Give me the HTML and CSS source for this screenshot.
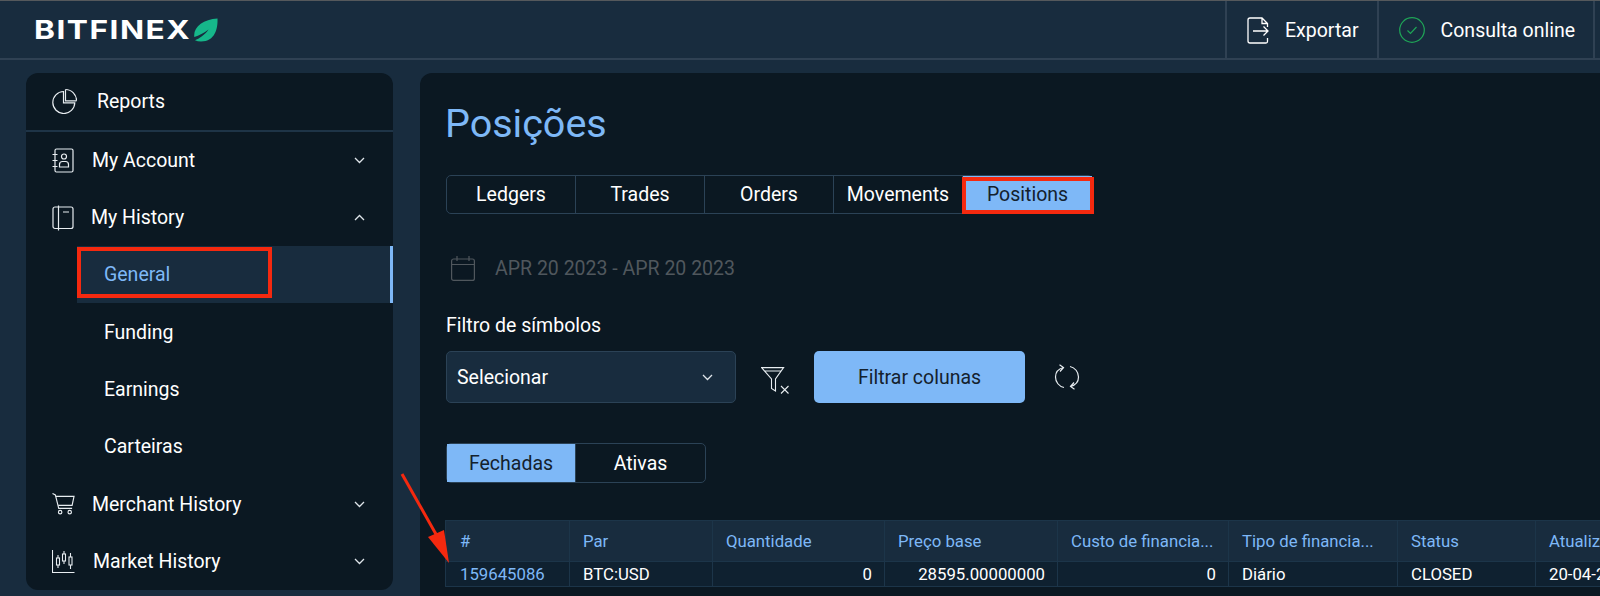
FILE: index.html
```html
<!DOCTYPE html>
<html>
<head>
	<meta charset="utf-8">
	<meta name="viewport" content="width=device-width, initial-scale=1">
	<title>Bitfinex Reports</title>
	<link rel="stylesheet" href="styles.css">
</head>
<body>
<header class="topbar">
   <div class="logo">
      <span class="logo-text">BITFINEX</span>
      <svg class="logo-leaf" width="24" height="24" viewBox="0 0 24 24"><path d="M23.500 .5C23.800 8 22.500 23.500 7 23.500c-2.300 0-4.300-.4-6-1.200C5 20.500 11 17 14.500 11.500 10 15 5 17.500 .3 19 -1 9 9 1.500 23.500 .5z" fill="#16b78a"/></svg>
   </div>
   <div class="topbar-right">
      <div class="top-item">
         <svg width="22" height="27" viewBox="0 0 22 27" fill="none" stroke="#fff" stroke-width="1.300"><path d="M20.500 10V6.500L15 1H3a2 2 0 0 0-2 2v21a2 2 0 0 0 2 2h16a1.500 1.500 0 0 0 1.500-1.500V21M15 1v5.500h5.500M6 14h15M16.500 9.500 21 14l-4.500 4.500"/></svg>
         <span>Exportar</span>
      </div>
      <div class="top-item">
         <svg width="26" height="26" viewBox="0 0 26 26" fill="none" stroke="#1fa557" stroke-width="1.200"><circle cx="13" cy="13" r="12.300"/><path d="M8.500 13.500l3 3 6-6.500"/></svg>
         <span>Consulta online</span>
      </div>
   </div>
</header>

<div class="page">
   <nav class="sidebar">
      <div class="nav-item nav-reports">
         <svg width="25" height="26" viewBox="0 0 25 26" fill="none" stroke="#e8edf1" stroke-width="1.200"><path d="M11.500 3.500a11 11 0 1 0 11.300 11.300H11.500z"/><path d="M13.500 1.500v11.300h11"/><path d="M13.500 1.500a11 11 0 0 1 11 11.300"/></svg>
         <span>Reports</span>
      </div>
      <div class="nav-item">
         <svg width="22" height="25" viewBox="0 0 22 25" fill="none" stroke="#e8edf1" stroke-width="1.200"><rect x="3" y="1" width="18" height="23" rx="1.500"/><path d="M.5 6.500h5M.5 12.500h5M.5 18.500h5"/><circle cx="12" cy="8.500" r="2.500"/><path d="M7.500 19v-2.500a3 3 0 0 1 3-3h3a3 3 0 0 1 3 3V19z"/></svg>
         <span>My Account</span>
         <svg class="chev" width="11" height="7" viewBox="0 0 11 7" fill="none" stroke="#dfe5ea" stroke-width="1.300"><path d="M1 1l4.500 4.500L10 1"/></svg>
      </div>
      <div class="nav-item nav-tight">
         <svg width="22" height="26" viewBox="0 0 22 26" fill="none" stroke="#e8edf1" stroke-width="1.200"><rect x="1" y="2" width="20" height="21.500" rx="2"/><path d="M6.500 .5v25M11 7h6"/></svg>
         <span>My History</span>
         <svg class="chev" width="11" height="7" viewBox="0 0 11 7" fill="none" stroke="#dfe5ea" stroke-width="1.300"><path d="M1 6l4.500-4.500L10 6"/></svg>
      </div>
      <div class="sub-item active">General</div>
      <div class="sub-item">Funding</div>
      <div class="sub-item">Earnings</div>
      <div class="sub-item">Carteiras</div>
      <div class="nav-item nav-tight">
         <svg width="23" height="22" viewBox="0 0 24 23" fill="none" stroke="#e8edf1" stroke-width="1.200"><path d="M.5 .5l3 1.500 3.500 14h14"/><path d="M3.800 3.500H23l-2 9.500H6.500"/><circle cx="8.500" cy="20" r="1.800"/><circle cx="18.500" cy="20" r="1.800"/></svg>
         <span>Merchant History</span>
         <svg class="chev" width="11" height="7" viewBox="0 0 11 7" fill="none" stroke="#dfe5ea" stroke-width="1.300"><path d="M1 1l4.500 4.500L10 1"/></svg>
      </div>
      <div class="nav-item">
         <svg width="23" height="23" viewBox="0 0 23 23" fill="none" stroke="#e8edf1" stroke-width="1.100"><path d="M.5 0v22.500H22.500"/><rect x="4.500" y="8" width="3" height="7"/><path d="M6 5v3M6 15v3"/><rect x="10.500" y="4" width="3" height="7"/><path d="M12 1v3M12 11v3"/><rect x="17" y="7" width="3" height="8"/><path d="M18.500 3v4M18.500 15v4"/></svg>
         <span>Market History</span>
         <svg class="chev" width="11" height="7" viewBox="0 0 11 7" fill="none" stroke="#dfe5ea" stroke-width="1.300"><path d="M1 1l4.500 4.500L10 1"/></svg>
      </div>
   </nav>

   <main class="content">
      <h1>Posições</h1>

      <div class="tabs">
         <div class="tab">Ledgers</div>
         <div class="tab">Trades</div>
         <div class="tab">Orders</div>
         <div class="tab">Movements</div>
         <div class="tab selected">Positions</div>
      </div>

      <div class="dates">
         <svg width="24" height="25" viewBox="0 0 24 25" fill="none" stroke="#50575d" stroke-width="1.200"><rect x=".6" y="3" width="22.800" height="21.400" rx="2"/><path d="M.6 8.500h22.800M6 0v5M18 0v5"/></svg>
         <span>APR 20 2023 - APR 20 2023</span>
      </div>

      <label class="filter-label">Filtro de símbolos</label>
      <div class="filters">
         <div class="select">
            <span>Selecionar</span>
            <svg width="11" height="7" viewBox="0 0 11 7" fill="none" stroke="#dfe5ea" stroke-width="1.300"><path d="M1 1l4.500 4.500L10 1"/></svg>
         </div>
         <svg class="clear-icon" width="28" height="27" viewBox="0 0 28 27" fill="none" stroke="#e8edf1" stroke-width="1.100"><path d="M.6 .6h22L14.500 12v12l-4-2.500V12zM3 4h17"/><path d="M20 19l7.500 7.500M27.500 19 20 26.500"/></svg>
         <button class="filter-btn">Filtrar colunas</button>
         <svg class="refresh-icon" width="26" height="26" viewBox="0 0 26 26" fill="none" stroke="#e8edf1" stroke-width="1.200"><path d="M9.500 3.500C4.500 4.800 1.500 8.500 1.500 13c0 5 3.500 9.500 8.500 10.500"/><path d="M5.500 .8 9.500 3.500 6 7.500"/><path d="M16.500 22.500c5-1.300 8-5 8-9.500 0-5-3.500-9.500-8.500-10.500"/><path d="M20.500 25.200l-4-2.700 3.500-4"/></svg>
      </div>

      <div class="tabs tabs-small">
         <div class="tab selected">Fechadas</div>
         <div class="tab">Ativas</div>
      </div>

      <table class="data-table">
         <thead>
            <tr>
               <th class="c-id">#</th>
               <th class="c-pair">Par</th>
               <th class="c-amount">Quantidade</th>
               <th class="c-price">Preço base</th>
               <th class="c-cost">Custo de financia...</th>
               <th class="c-type">Tipo de financia...</th>
               <th class="c-status">Status</th>
               <th class="c-date">Atualizado em</th>
            </tr>
         </thead>
         <tbody>
            <tr>
               <td class="link">159645086</td>
               <td>BTC:USD</td>
               <td class="num">0</td>
               <td class="num">28595.00000000</td>
               <td class="num">0</td>
               <td>Diário</td>
               <td>CLOSED</td>
               <td>20-04-2023 10:21:05</td>
            </tr>
         </tbody>
      </table>
   </main>
</div>

<!-- red marks drawn over the screenshot -->
<div class="mark mark-general"></div>
<div class="mark mark-positions"></div>
<svg class="mark-arrow" width="52" height="92" viewBox="0 0 52 92"><path d="M2 1l35 62" stroke="#f5290f" stroke-width="3" fill="none"/><path d="M49 90 28 64 44 57z" fill="#f5290f"/></svg>
</body>
</html>
```

FILE: styles.css
```css
* {
   box-sizing: border-box;
}

body {
   margin: 0;
   height: 596px;
   overflow: hidden;
   position: relative;
   background: #182c3e;
   color: #fff;
   font-family: Roboto, "Liberation Sans", sans-serif;
   font-size: 19.5px;
}

.topbar {
   height: 60px;
   display: flex;
   justify-content: space-between;
   border-top: 1px solid #55595c;
   border-bottom: 2px solid #2f4153;
}

.logo {
   display: flex;
   align-items: center;
   padding-left: 34px;
}

.logo-text {
   display: block;
   width: 160px;
   font-family: Inter, "Liberation Sans", sans-serif;
   font-weight: 700;
   font-size: 26px;
   line-height: 30px;
   letter-spacing: 1.2px;
   transform: scaleX(1.22);
   transform-origin: left center;
}

.topbar-right {
   display: flex;
   padding-right: 5px;
}

.top-item {
   display: flex;
   align-items: center;
   gap: 16px;
   padding: 1px 18px 0 20px;
   border-left: 2px solid #2f4153;
}

.top-item:last-child {
   border-right: 2px solid #2f4153;
}

.page {
   display: flex;
   padding: 13px 0 0 26px;
   gap: 27px;
   height: 536px;
}

.sidebar {
   width: 367px;
   height: 517px;
   background: #0b1822;
   border-radius: 12px;
   overflow: hidden;
   flex-shrink: 0;
}

.nav-item {
   height: 57.3px;
   display: flex;
   align-items: center;
   gap: 18px;
   padding: 0 28px 0 26px;
}

.nav-tight {
   gap: 17px;
}

.nav-reports {
   height: 58.6px;
   gap: 20px;
   border-bottom: 2px solid #1e3447;
}

.chev {
   margin-left: auto;
}

.sub-item {
   height: 57.3px;
   display: flex;
   align-items: center;
   margin-left: 51px;
   padding-left: 27px;
}

.active {
   background: #182c3e;
   color: #7eb8f7;
   border-right: 3px solid #7eb8f7;
}

.content {
   flex: 1;
   min-width: 0;
   background: #0b1822;
   border-radius: 12px 0 0 0;
   padding: 0 0 0 26px;
   overflow: hidden;
}

h1 {
   margin: 0 0 0 -1px;
   padding-top: 27px;
   height: 102px;
   font-size: 39.5px;
   line-height: 48px;
   font-weight: 400;
   color: #7eb8f7;
}

.tabs {
   display: inline-flex;
   height: 39px;
   border: 1px solid #2b4256;
   border-radius: 5px;
   vertical-align: top;
}

.tab {
   width: 129px;
   display: flex;
   align-items: center;
   justify-content: center;
   border-right: 1px solid #2b4256;
}

.tab:last-child {
   border-right: 0;
}

.tab.selected {
   background: #7eb8f7;
   color: #14212d;
}

.dates {
   display: flex;
   align-items: center;
   gap: 20px;
   margin: 41px 0 0 5px;
   height: 26px;
   color: #50575d;
}

.filter-label {
   display: block;
   margin-top: 33px;
   line-height: 24px;
}

.filters {
   display: flex;
   align-items: center;
   margin-top: 13px;
}

.select {
   width: 290px;
   height: 52px;
   display: flex;
   align-items: center;
   justify-content: space-between;
   padding: 0 22px 0 10px;
   background: #182c3e;
   border: 1px solid #2b4256;
   border-radius: 5px;
}

.clear-icon {
   margin: 6px 0 0 25px;
}

.filter-btn {
   width: 211px;
   height: 52px;
   margin-left: 25px;
   background: #7eb8f7;
   color: #14212d;
   border: 0;
   border-radius: 5px;
   font: inherit;
}

.refresh-icon {
   margin-left: 29px;
}

.tabs-small {
   margin-top: 40px;
   height: 40px;
}

.data-table {
   display: table;
   margin: 37px 0 0 -1px;
   width: 1271px;
   table-layout: fixed;
   border-collapse: collapse;
   font-size: 16.75px;
}

.data-table th {
   height: 41px;
   font-weight: 400;
   text-align: left;
   color: #7eb8f7;
   background: #182c3e;
}

.data-table td {
   height: 25px;
   background: #0f2130;
}

.data-table th,
.data-table td {
   padding: 0 13px;
   border: 1px solid #1c3549;
   white-space: nowrap;
   overflow: hidden;
}

.data-table th.c-id,
.data-table td.link {
   padding-left: 14px;
}

.data-table .link {
   color: #7eb8f7;
}

.data-table .num {
   text-align: right;
   padding-right: 12px;
}

.c-id { width: 124px; }
.c-pair { width: 143px; }
.c-amount { width: 172px; }
.c-price { width: 173px; }
.c-cost { width: 171px; }
.c-type { width: 169px; }
.c-status { width: 138px; }
.c-date { width: 181px; }

.mark {
   position: absolute;
   border: 4px solid #f5290f;
}

.mark-general {
   left: 77px;
   top: 247px;
   width: 195px;
   height: 51px;
}

.mark-positions {
   left: 962px;
   top: 177px;
   width: 132px;
   height: 37px;
}

.mark-arrow {
   position: absolute;
   left: 400px;
   top: 473px;
}
```
